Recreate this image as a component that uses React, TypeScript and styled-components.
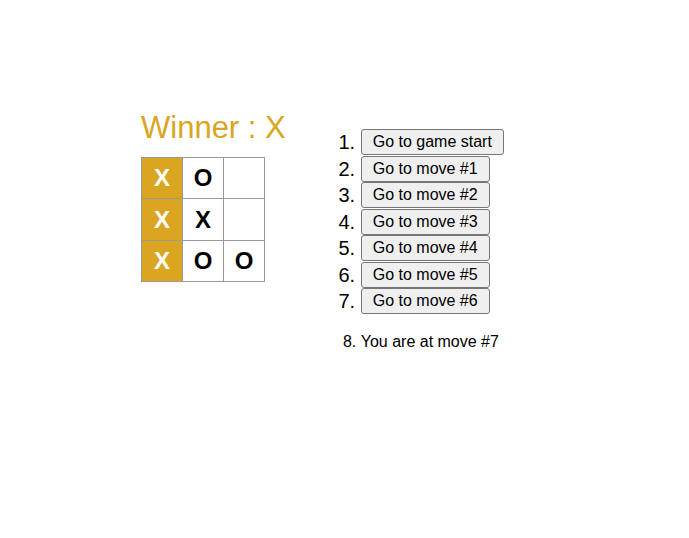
import React from "react";
import styled, { createGlobalStyle } from "styled-components";

const Global = createGlobalStyle`
  html, body { margin: 0; padding: 0; background: #fff; }
  body { font-family: "Liberation Sans", Arial, sans-serif; color: #000; }
`;

const Game = styled.div`
  display: flex;
  flex-direction: row;
  align-items: flex-start;
  padding: 110px 0 0 141px;
`;

const BoardColumn = styled.div`
  display: flex;
  flex-direction: column;
`;

const Status = styled.div`
  font-size: 31px;
  color: #daa520;
  margin-bottom: 11px;
`;

const Board = styled.div`
  display: grid;
  grid-template-columns: repeat(3, 41px);
  grid-template-rows: 41px 42px 41px;
  border-top: 1px solid #999;
  border-left: 1px solid #999;
  width: max-content;
`;

const Square = styled.button<{ $win: boolean }>`
  box-sizing: border-box;
  width: 41px;
  height: 100%;
  margin: 0;
  padding: 0;
  border: none;
  border-right: 1px solid #999;
  border-bottom: 1px solid #999;
  border-radius: 0;
  background: ${(p) => (p.$win ? "#daa520" : "#fff")};
  color: ${(p) => (p.$win ? "#fff" : "#000")};
  font-family: "Liberation Sans", Arial, sans-serif;
  font-weight: bold;
  font-size: 24px;
  line-height: 40px;
  text-align: center;
`;

const Info = styled.div`
  margin-left: 35px;
  padding-top: 19px;
`;

const MoveList = styled.ol`
  margin: 0;
  padding-left: 40px;
`;

const MoveItem = styled.li`
  font-size: 20px;
  height: 26.5px;
  line-height: 26.5px;
`;

const CurrentItem = styled.li`
  font-size: 16px;
  margin-top: 18px;
`;

const MoveButton = styled.button`
  font-family: "Liberation Sans", Arial, sans-serif;
  font-size: 16px;
  line-height: 18px;
  padding: 3px 11px;
  border: 1px solid #767676;
  border-radius: 3px;
  background: #efefef;
  color: #000;
  vertical-align: top;
  margin: 0;
`;

const squares = ["X", "O", null, "X", "X", null, "X", "O", "O"];
const winLine = [0, 3, 6];

export default function App() {
  const moves = ["Go to game start", ...[1, 2, 3, 4, 5, 6].map((n) => `Go to move #${n}`)];
  return (
    <>
      <Global />
      <Game>
        <BoardColumn>
          <Status>Winner : X</Status>
          <Board>
            {squares.map((s, i) => (
              <Square key={i} $win={winLine.includes(i)}>
                {s}
              </Square>
            ))}
          </Board>
        </BoardColumn>
        <Info>
          <MoveList>
            {moves.map((m) => (
              <MoveItem key={m}>
                <MoveButton>{m}</MoveButton>
              </MoveItem>
            ))}
            <CurrentItem>You are at move #7</CurrentItem>
          </MoveList>
        </Info>
      </Game>
    </>
  );
}
